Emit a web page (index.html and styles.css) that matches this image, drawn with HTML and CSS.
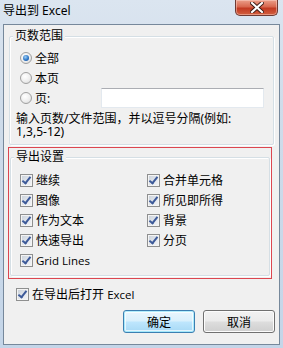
FILE: index.html
```html
<!DOCTYPE html>
<html lang="zh-CN">
<head>
<meta charset="utf-8">
<title>导出到 Excel</title>
<link rel="stylesheet" href="styles.css">
</head>
<body>
<div class="window">
  <div class="titlebar">
    <span class="title">导出到 Excel</span>
    <div class="close">
      <svg width="14" height="11" viewBox="0 0 14 11"><path d="M2 1 L12 10 M12 1 L2 10" stroke="#3a1a14" stroke-width="4" stroke-linecap="square"/><path d="M2 1 L12 10 M12 1 L2 10" stroke="#ffffff" stroke-width="2.2" stroke-linecap="square"/></svg>
    </div>
  </div>
  <div class="client">
    <div class="group g1">
      <span class="legend">页数范围</span>
      <div class="row radio-row"><span class="radio on"></span><span>全部</span></div>
      <div class="row radio-row"><span class="radio"></span><span>本页</span></div>
      <div class="row radio-row"><span class="radio"></span><span>页:</span><span class="textbox"></span></div>
      <p class="hint">输入页数/文件范围，并以逗号分隔(例如:<br>1,3,5-12)</p>
    </div>
    <div class="highlight">
      <div class="group g2">
        <span class="legend">导出设置</span>
        <div class="grid">
          <div class="row"><span class="check"></span><span>继续</span></div>
          <div class="row"><span class="check"></span><span>合并单元格</span></div>
          <div class="row"><span class="check"></span><span>图像</span></div>
          <div class="row"><span class="check"></span><span>所见即所得</span></div>
          <div class="row"><span class="check"></span><span>作为文本</span></div>
          <div class="row"><span class="check"></span><span>背景</span></div>
          <div class="row"><span class="check"></span><span>快速导出</span></div>
          <div class="row"><span class="check"></span><span>分页</span></div>
          <div class="row"><span class="check"></span><span class="latin">Grid Lines</span></div>
        </div>
      </div>
    </div>
    <div class="row open-row"><span class="check"></span><span>在导出后打开 <span class="latin">Excel</span></span></div>
    <div class="buttons">
      <button class="btn default">确定</button>
      <button class="btn">取消</button>
    </div>
  </div>
</div>
</body>
</html>
```
FILE: styles.css
```css
html, body {
  margin: 0;
  padding: 0;
}
body {
  width: 283px;
  height: 348px;
  overflow: hidden;
  font-family: "Noto Sans", "Noto Sans CJK SC", sans-serif;
  font-size: 12px;
  color: #000;
}
.window {
  width: 283px;
  height: 348px;
  box-sizing: border-box;
  padding: 0 3px 3px 3px;
  background: linear-gradient(180deg, #dbe5f0 0%, #cfdcea 30%, #c4d5e8 100%);
  display: flex;
  flex-direction: column;
}
.titlebar {
  height: 24px;
  display: flex;
  align-items: flex-start;
  justify-content: space-between;
  flex: none;
}
.title {
  line-height: 22px;
  font-size: 12px;
}
.close {
  width: 43px;
  height: 16px;
  margin-right: 2px;
  box-sizing: border-box;
  border: 1px solid #6e3a33;
  border-top: none;
  border-radius: 0 0 5px 5px;
  background: linear-gradient(180deg, #eb9f8a 0%, #d8684f 45%, #c23a22 55%, #d2603f 100%);
  box-shadow: inset 0 0 0 1px rgba(255, 220, 210, 0.45);
  display: flex;
  align-items: center;
  justify-content: center;
}
.client {
  height: 321px;
  box-sizing: border-box;
  border: 1px solid #76889b;
  background: #f0f0f0;
  display: flex;
  flex-direction: column;
}
.group {
  position: relative;
  border: 1px solid #d5dfe5;
  box-shadow: inset 1px 1px 0 #ffffff, 1px 1px 0 #ffffff;
  border-radius: 2px;
}
.legend {
  position: absolute;
  top: -9px;
  left: 3px;
  padding: 0 2px;
  line-height: 16px;
  background: #f0f0f0;
}
.g1 {
  margin: 11px 5px 0 5px;
  padding: 11px 9px 6px 6px;
}
.row {
  height: 20px;
  display: flex;
  align-items: center;
  gap: 3px;
  white-space: nowrap;
}
.radio-row {
  padding-left: 4px;
}
.radio {
  width: 12px;
  height: 12px;
  box-sizing: border-box;
  border-radius: 50%;
  border: 1px solid #a0a0a0;
  background: radial-gradient(circle at 40% 35%, #ffffff 0%, #eeeeee 55%, #d4d4d4 100%);
  flex: none;
  position: relative;
}
.radio.on::after {
  content: "";
  position: absolute;
  left: 2px;
  top: 2px;
  width: 6px;
  height: 6px;
  border-radius: 50%;
  background: radial-gradient(circle at 40% 35%, #9fd0f6 0%, #2d76c6 55%, #174c93 100%);
}
.textbox {
  margin-left: auto;
  width: 163px;
  height: 20px;
  box-sizing: border-box;
  background: #fff;
  border: 1px solid #e3e9ef;
  border-top-color: #abadb3;
}
.hint {
  margin: 4px 0 0 0;
  line-height: 13px;
}
.highlight {
  margin: 2px 7px 0 4px;
  border: 1px solid #dc4650;
  padding: 9px 1px 2px 1px;
}
.g2 {
  padding: 12px 4px 5px 9px;
}
.grid {
  display: grid;
  grid-template-columns: 127px 1fr;
}
.check {
  width: 13px;
  height: 13px;
  box-sizing: border-box;
  border: 1px solid #8e8f8f;
  background: linear-gradient(135deg, #c7cfd8 0%, #e6e9ee 60%, #f4f5f7 100%);
  box-shadow: inset 0 0 0 1px #f4f4f4;
  flex: none;
  position: relative;
}
.check::after {
  content: "";
  position: absolute;
  left: 3px;
  top: 0px;
  width: 3px;
  height: 7px;
  border: solid #3d5a99;
  border-width: 0 2px 2px 0;
  transform: rotate(38deg);
}
.latin {
  font-family: "Open Sans", "Noto Sans", sans-serif;
  font-size: 11.5px;
}
.open-row {
  margin: 5px 0 0 12px;
}
.buttons {
  display: flex;
  justify-content: flex-end;
  gap: 8px;
  margin: 6px 4px 0 0;
}
.btn {
  width: 72px;
  height: 23px;
  box-sizing: border-box;
  border: 1px solid #707070;
  border-radius: 3px;
  background: linear-gradient(180deg, #f2f2f2 0%, #ebebeb 48%, #dddddd 52%, #cfcfcf 100%);
  box-shadow: inset 0 0 0 1px #fcfcfc;
  font-family: "Noto Sans CJK SC", "Noto Sans", sans-serif;
  font-size: 12px;
  color: #000;
  padding: 0;
}
.btn.default {
  border-color: #3c7fb1;
  background: linear-gradient(180deg, #eaf6fd 0%, #d9f0fc 48%, #bee6fd 52%, #a7d9f5 100%);
  box-shadow: inset 0 0 0 1px #48d8fb66, inset 0 0 0 2px #ffffffaa;
}
```
